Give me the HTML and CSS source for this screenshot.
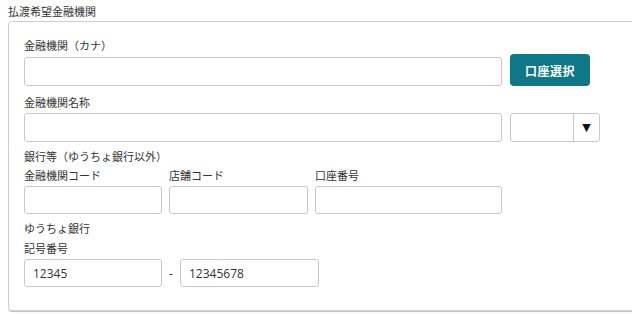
FILE: index.html
```html
<!DOCTYPE html>
<html lang="ja">
<head>
<meta charset="utf-8">
<link rel="stylesheet" href="styles.css">
</head>
<body>
<div class="page">
  <div class="title">払渡希望金融機関</div>
  <div class="clip">
    <div class="panel">
      <div class="row row-first">
        <div class="field grow">
          <div class="label">金融機関（カナ）</div>
          <input class="input h29" type="text">
        </div>
        <button class="btn">口座選択</button>
      </div>
      <div class="row row-second">
        <div class="field grow">
          <div class="label">金融機関名称</div>
          <input class="input h29" type="text">
        </div>
        <div class="select">
          <div class="select-value"></div>
          <div class="select-arrow">▼</div>
        </div>
      </div>
      <div class="label section">銀行等（ゆうちょ銀行以外）</div>
      <div class="row row-codes">
        <div class="field w-bank">
          <div class="label">金融機関コード</div>
          <input class="input h28" type="text">
        </div>
        <div class="field w-branch">
          <div class="label">店舗コード</div>
          <input class="input h28" type="text">
        </div>
        <div class="field w-account">
          <div class="label">口座番号</div>
          <input class="input h28" type="text">
        </div>
      </div>
      <div class="label section2">ゆうちょ銀行</div>
      <div class="label sublabel">記号番号</div>
      <div class="row row-yucho">
        <input class="input h28 w-bank" type="text" value="12345">
        <span class="dash">-</span>
        <input class="input h28 w-branch" type="text" value="12345678">
      </div>
    </div>
  </div>
</div>
</body>
</html>
```

FILE: styles.css
```css
html, body {
  margin: 0;
  padding: 0;
  overflow: hidden;
  background: #fff;
}
body {
  font-family: "Open Sans", "Noto Sans CJK JP", sans-serif;
  font-size: 11px;
  color: #333;
}
.page {
  padding: 3px 0 0 8px;
  width: 632px;
  box-sizing: border-box;
}
.title {
  line-height: 18px;
  height: 18px;
}
.clip {
  overflow: hidden;
  width: 624px;
  height: 293px;
}
.panel {
  width: 660px;
  box-sizing: border-box;
  border: 1px solid #cfcfcf;
  border-radius: 4px;
  box-shadow: 0 1px 1px rgba(0,0,0,0.25);
  padding: 15px 0 21px 15px;
  height: 290px;
}
.label {
  line-height: 18px;
  height: 18px;
  white-space: nowrap;
}
.row {
  display: flex;
}
.row-first {
  align-items: flex-end;
}
.row-first .label { margin-bottom: 2px; }
.row-second {
  margin-top: 8px;
  align-items: flex-end;
}
.row-second .label { margin-bottom: 1px; }
.field {
  display: flex;
  flex-direction: column;
}
.grow {
  width: 478px;
  flex: none;
}
.input {
  box-sizing: border-box;
  border: 1px solid #c8c8c8;
  border-radius: 3px;
  background: #fff;
  font-family: "Open Sans", "Noto Sans CJK JP", sans-serif;
  font-size: 12px;
  color: #333;
  padding: 0 8px;
  margin: 0;
  outline: none;
}
.h29 { height: 29px; }
.h28 { height: 28px; }
.btn {
  margin-left: 8px;
  width: 80px;
  height: 32px;
  border: none;
  border-radius: 4px;
  background: #0e7889;
  color: #fff;
  font-family: "Noto Sans CJK JP", sans-serif;
  font-weight: bold;
  font-size: 12px;
  letter-spacing: 0.5px;
  padding: 0;
}
.select {
  margin-left: 8px;
  width: 90px;
  height: 29px;
  box-sizing: border-box;
  border: 1px solid #c8c8c8;
  border-radius: 3px;
  display: flex;
}
.select-value {
  width: 62px;
  border-right: 1px solid #c8c8c8;
}
.select-arrow {
  flex: 1;
  display: flex;
  align-items: center;
  justify-content: center;
  font-size: 11px;
  color: #111;
  font-family: "DejaVu Sans", sans-serif;
}
.section {
  margin-top: 6px;
}
.row-codes {
  margin-top: 1px;
  gap: 7px;
}
.row-codes .label { margin-bottom: 1px; }
.w-bank { width: 138px; }
.w-branch { width: 139px; }
.w-account { width: 187px; }
.section2 {
  margin-top: 6px;
}
.sublabel {
  margin-top: 2px;
}
.row-yucho {
  margin-top: 1px;
  align-items: center;
}
.dash {
  width: 18px;
  text-align: center;
  font-size: 12px;
}
```
